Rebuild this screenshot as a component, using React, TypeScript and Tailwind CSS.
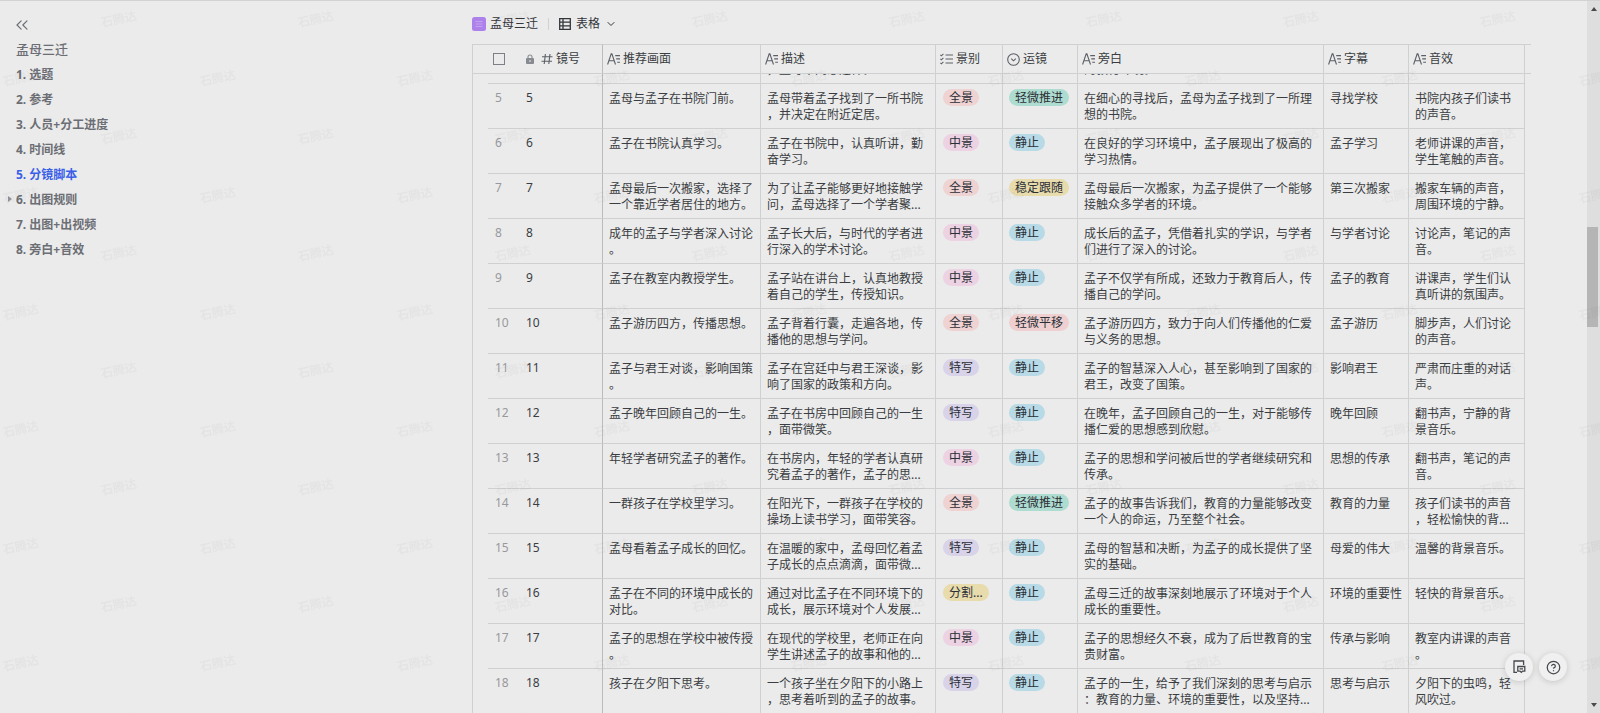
import type { ReactNode } from "react";
import { ChevronDown, ChevronsLeft, CircleHelp } from "lucide-react";

type Shot = {
  id: number;
  scene: string;
  desc: string;
  size: string;
  move: string;
  voice: string;
  caption: string;
  sound: string;
};

const outline = [
  { label: "1. 选题" },
  { label: "2. 参考" },
  { label: "3. 人员+分工进度" },
  { label: "4. 时间线" },
  { label: "5. 分镜脚本", active: true },
  { label: "6. 出图规则", nested: true },
  { label: "7. 出图+出视频" },
  { label: "8. 旁白+音效" },
];

const tagColors: Record<string, string> = {
  全景: "bg-[#efd2d2]",
  中景: "bg-[#ecd2e3]",
  特写: "bg-[#d9d3e9]",
  "分割...": "bg-[#e8dbac]",
  轻微推进: "bg-[#aedcd0]",
  静止: "bg-[#b7dae6]",
  稳定跟随: "bg-[#e8dbac]",
  轻微平移: "bg-[#efcfcf]",
};

const shots: Shot[] = [
  { id: 5, scene: "孟母与孟子在书院门前。", desc: "孟母带着孟子找到了一所书院，并决定在附近定居。", size: "全景", move: "轻微推进", voice: "在细心的寻找后，孟母为孟子找到了一所理想的书院。", caption: "寻找学校", sound: "书院内孩子们读书的声音。" },
  { id: 6, scene: "孟子在书院认真学习。", desc: "孟子在书院中，认真听讲，勤奋学习。", size: "中景", move: "静止", voice: "在良好的学习环境中，孟子展现出了极高的学习热情。", caption: "孟子学习", sound: "老师讲课的声音，学生笔触的声音。" },
  { id: 7, scene: "孟母最后一次搬家，选择了一个靠近学者居住的地方。", desc: "为了让孟子能够更好地接触学问，孟母选择了一个学者聚...", size: "全景", move: "稳定跟随", voice: "孟母最后一次搬家，为孟子提供了一个能够接触众多学者的环境。", caption: "第三次搬家", sound: "搬家车辆的声音，周围环境的宁静。" },
  { id: 8, scene: "成年的孟子与学者深入讨论。", desc: "孟子长大后，与时代的学者进行深入的学术讨论。", size: "中景", move: "静止", voice: "成长后的孟子，凭借着扎实的学识，与学者们进行了深入的讨论。", caption: "与学者讨论", sound: "讨论声，笔记的声音。" },
  { id: 9, scene: "孟子在教室内教授学生。", desc: "孟子站在讲台上，认真地教授着自己的学生，传授知识。", size: "中景", move: "静止", voice: "孟子不仅学有所成，还致力于教育后人，传播自己的学问。", caption: "孟子的教育", sound: "讲课声，学生们认真听讲的氛围声。" },
  { id: 10, scene: "孟子游历四方，传播思想。", desc: "孟子背着行囊，走遍各地，传播他的思想与学问。", size: "全景", move: "轻微平移", voice: "孟子游历四方，致力于向人们传播他的仁爱与义务的思想。", caption: "孟子游历", sound: "脚步声，人们讨论的声音。" },
  { id: 11, scene: "孟子与君王对谈，影响国策。", desc: "孟子在宫廷中与君王深谈，影响了国家的政策和方向。", size: "特写", move: "静止", voice: "孟子的智慧深入人心，甚至影响到了国家的君王，改变了国策。", caption: "影响君王", sound: "严肃而庄重的对话声。" },
  { id: 12, scene: "孟子晚年回顾自己的一生。", desc: "孟子在书房中回顾自己的一生，面带微笑。", size: "特写", move: "静止", voice: "在晚年，孟子回顾自己的一生，对于能够传播仁爱的思想感到欣慰。", caption: "晚年回顾", sound: "翻书声，宁静的背景音乐。" },
  { id: 13, scene: "年轻学者研究孟子的著作。", desc: "在书房内，年轻的学者认真研究着孟子的著作，孟子的思...", size: "中景", move: "静止", voice: "孟子的思想和学问被后世的学者继续研究和传承。", caption: "思想的传承", sound: "翻书声，笔记的声音。" },
  { id: 14, scene: "一群孩子在学校里学习。", desc: "在阳光下，一群孩子在学校的操场上读书学习，面带笑容。", size: "全景", move: "轻微推进", voice: "孟子的故事告诉我们，教育的力量能够改变一个人的命运，乃至整个社会。", caption: "教育的力量", sound: "孩子们读书的声音，轻松愉快的背..." },
  { id: 15, scene: "孟母看着孟子成长的回忆。", desc: "在温暖的家中，孟母回忆着孟子成长的点点滴滴，面带微...", size: "特写", move: "静止", voice: "孟母的智慧和决断，为孟子的成长提供了坚实的基础。", caption: "母爱的伟大", sound: "温馨的背景音乐。" },
  { id: 16, scene: "孟子在不同的环境中成长的对比。", desc: "通过对比孟子在不同环境下的成长，展示环境对个人发展...", size: "分割...", move: "静止", voice: "孟母三迁的故事深刻地展示了环境对于个人成长的重要性。", caption: "环境的重要性", sound: "轻快的背景音乐。" },
  { id: 17, scene: "孟子的思想在学校中被传授。", desc: "在现代的学校里，老师正在向学生讲述孟子的故事和他的...", size: "中景", move: "静止", voice: "孟子的思想经久不衰，成为了后世教育的宝贵财富。", caption: "传承与影响", sound: "教室内讲课的声音。" },
  { id: 18, scene: "孩子在夕阳下思考。", desc: "一个孩子坐在夕阳下的小路上，思考着听到的孟子的故事。", size: "特写", move: "静止", voice: "孟子的一生，给予了我们深刻的思考与启示：教育的力量、环境的重要性，以及坚持...", caption: "思考与启示", sound: "夕阳下的虫鸣，轻风吹过。" },
];

const TextIcon = () => (
  <svg width="13" height="12" viewBox="0 0 13 12" fill="none" stroke="currentColor" strokeWidth="1.1">
    <path d="M.6 11.5 4.2.8h.7l3.6 10.7M1.8 7.8h5.4M8.2 2.6H13M9.2 5.9H13M10.2 9.2H13" />
  </svg>
);

const HashIcon = () => (
  <svg width="12" height="12" viewBox="0 0 12 12" fill="none" stroke="currentColor" strokeWidth="1.1">
    <path d="M4.4 1 3.2 11M9 1 7.8 11M1 3.8h10.5M.5 8.2H11" />
  </svg>
);

const LockIcon = () => (
  <svg width="8" height="10" viewBox="0 0 8 10" fill="none">
    <path d="M2 4.5V3a2 2 0 0 1 4 0v1.5" stroke="#878b91" strokeWidth="1.1" />
    <rect y="4" width="8" height="6" rx="1" fill="#878b91" />
    <path d="M4 6v2" stroke="#ebebeb" />
  </svg>
);

const ListIcon = () => (
  <svg width="13" height="12" viewBox="0 0 13 12" fill="none" stroke="currentColor" strokeWidth="1.1">
    <path d="M5.5 2H13M5.5 6H13M5.5 10H13M.4 1.8l1 1L3.4.8M.4 5.8l1 1 2-2M.4 9.8l1 1 2-2" />
  </svg>
);

const SelectIcon = () => (
  <svg width="13" height="13" viewBox="0 0 13 13" fill="none" stroke="currentColor" strokeWidth="1.1">
    <circle cx="6.5" cy="6.5" r="5.8" />
    <path d="m4.2 5.6 2.3 2.2 2.3-2.2" />
  </svg>
);

const GridIcon = () => (
  <svg width="12" height="12" viewBox="0 0 12 12" fill="none" stroke="currentColor" strokeWidth="1.3">
    <path d="M.7.7h10.6v10.6H.7zM4 .7v10.6M.7 4.2h10.6M.7 7.8h10.6" />
  </svg>
);

const BaseIcon = () => (
  <svg width="14" height="14" viewBox="0 0 14 14" fill="none">
    <rect width="14" height="14" rx="2.5" fill="#ac82ea" />
    <path d="M3.5 4.5h7M3.5 7h7M3.5 9.5h7" stroke="#c7a2f0" />
  </svg>
);

const NoteIcon = () => (
  <svg width="13" height="14" viewBox="0 0 13 14" fill="none" stroke="currentColor" strokeWidth="1.3">
    <path d="M4 12.3H1V1h9.6v4" />
    <path d="M4.8 6.5h7v4.6H9.6l-1.3 1.3L7 11.1H4.8zM6.6 8.8H10" />
  </svg>
);

const Tag = ({ name }: { name: string }) => (
  <span className={`block w-fit rounded-full px-1.5 leading-[17px] whitespace-nowrap text-[#2b2f36] ${tagColors[name]}`}>
    {name}
  </span>
);

// "tail" is what still shows of the row that is scrolled under the header
const columns: { header: string; icon: ReactNode; tail?: string }[] = [
  { header: "推荐画面", icon: <TextIcon /> },
  { header: "描述", icon: <TextIcon />, tail: "，孟母不同意这样。" },
  { header: "景别", icon: <ListIcon /> },
  { header: "运镜", icon: <SelectIcon /> },
  { header: "旁白", icon: <TextIcon />, tail: "的教育环境。" },
  { header: "字幕", icon: <TextIcon /> },
  { header: "音效", icon: <TextIcon /> },
];

const Sidebar = () => (
  <nav className="w-[472px] shrink-0 pt-[14px] pl-4 text-xs font-bold text-[#6b6e74]">
    <button type="button" aria-label="收起目录" className="-ml-1 block">
      <ChevronsLeft size={20} strokeWidth={1.4} />
    </button>
    <h1 className="mt-[2px] text-[13px] leading-[25px] font-medium">孟母三迁</h1>
    <ul>
      {outline.map((item) => (
        <li key={item.label} className="relative leading-[25px]">
          {item.nested && (
            <span className="absolute top-[9px] -left-2 border-y-[3px] border-l-4 border-y-transparent border-l-[#8f9399]" />
          )}
          <a href="#" className={item.active ? "text-[#3a5fe8]" : ""}>
            {item.label}
          </a>
        </li>
      ))}
    </ul>
  </nav>
);

const Watermark = () => (
  <svg className="pointer-events-none absolute inset-0 h-full w-full" aria-hidden="true">
    <defs>
      <pattern id="mark" width="197" height="117" patternUnits="userSpaceOnUse">
        <g fill="#000" fillOpacity="0.035" fontSize="12" fontWeight="500">
          <text x="102" y="26" transform="rotate(-12 102 26)">石腾达</text>
          <text x="4" y="85" transform="rotate(-12 4 85)">石腾达</text>
        </g>
      </pattern>
    </defs>
    <rect width="100%" height="100%" fill="url(#mark)" />
  </svg>
);

const ShotTable = () => {
  const renderRow = (item: Shot) => (
    <tr key={item.id} className="h-[45px] align-top">
      <td />
      <td className="border-b border-[#cfd0d2] pt-1.5 pl-[7px] text-[#97999d]">{item.id}</td>
      <td className="border-r border-b border-r-[#b9bbbe] border-b-[#cfd0d2] pt-1.5">{item.id}</td>
      <td className="border-r border-b border-[#cfd0d2] pt-[7px] pl-1.5">{item.scene}</td>
      <td className="border-r border-b border-[#cfd0d2] pt-[7px] pr-1 pl-1.5">{item.desc}</td>
      <td className="border-r border-b border-[#cfd0d2] pt-[5px] pl-[7px]">
        <Tag name={item.size} />
      </td>
      <td className="border-r border-b border-[#cfd0d2] pt-[5px] pl-1.5">
        <Tag name={item.move} />
      </td>
      <td className="border-r border-b border-[#cfd0d2] pt-[7px] pr-1 pl-1.5">{item.voice}</td>
      <td className="border-r border-b border-[#cfd0d2] pt-[7px] pl-1.5">{item.caption}</td>
      <td className="border-r border-b border-[#cfd0d2] pt-[7px] pr-2 pl-1.5">{item.sound}</td>
    </tr>
  );

  return (
    <table className="w-[1059px] table-fixed border-separate border-spacing-0 border-l border-[#cfd0d2] text-xs leading-4 text-[#3a3d42] [line-break:anywhere] [text-spacing-trim:space-all]">
      <colgroup>
        <col className="w-[15px]" />
        <col className="w-[38px]" />
        <col className="w-[77px]" />
        <col className="w-[158px]" />
        <col className="w-[175px]" />
        <col className="w-[67px]" />
        <col className="w-[75px]" />
        <col className="w-[246px]" />
        <col className="w-[85px]" />
        <col />
        <col className="w-1.5" />
      </colgroup>
      <thead>
        <tr className="h-[30px]">
          <td className="border-y border-[#cfd0d2]" />
          <th className="border-y border-[#cfd0d2] pl-[5px] text-left">
            <input
              type="checkbox"
              aria-label="全选"
              className="block h-3 w-3 appearance-none border border-[#7d8187]"
            />
          </th>
          <th className="border-y border-r border-y-[#cfd0d2] border-r-[#b9bbbe] font-normal">
            <div className="flex items-center gap-[3px]">
              <LockIcon />
              <span className="ml-1 text-[#5c6066]">
                <HashIcon />
              </span>
              镜号
            </div>
          </th>
          {columns.map((col) => (
            <th key={col.header} className="border-y border-r border-[#cfd0d2] pl-1 font-normal">
              <div className="flex items-center gap-[3px]">
                <span className="text-[#5c6066]">{col.icon}</span>
                {col.header}
              </div>
            </th>
          ))}
          <td className="border-y border-[#cfd0d2]" />
        </tr>
      </thead>
      <tbody>
        <tr className="h-[10px] align-top">
          <td />
          <td className="border-b border-[#cfd0d2]" />
          <td className="border-r border-b border-r-[#b9bbbe] border-b-[#cfd0d2]" />
          {columns.map((col) => (
            <td key={col.header} className="border-r border-b border-[#cfd0d2] pl-1.5">
              <div className="flex h-1 items-end overflow-hidden whitespace-nowrap">{col.tail}</div>
            </td>
          ))}
        </tr>
        {shots.map(renderRow)}
      </tbody>
    </table>
  );
};

const ScrollBar = () => (
  <div className="flex w-[13px] shrink-0 flex-col items-center justify-between bg-[#dedede] py-1.5" aria-hidden="true">
    <span className="border-x-[3px] border-b-4 border-x-transparent border-b-[#4a4a4a]" />
    <div className="flex w-full flex-1 flex-col pr-0.5">
      <div className="flex-[216]" />
      <div className="h-[100px] bg-[#b5b5b5]" />
      <div className="flex-[376]" />
    </div>
    <span className="border-x-[3px] border-t-4 border-x-transparent border-t-[#4a4a4a]" />
  </div>
);

const FloatingActions = () => (
  <div className="absolute right-[33px] bottom-8 flex gap-1.5 text-[#45484d]">
    <button
      type="button"
      aria-label="评论"
      className="flex h-7 w-7 items-center justify-center rounded-full bg-[#f0f0f0] shadow-[0_1px_6px_rgba(0,0,0,0.16)]"
    >
      <NoteIcon />
    </button>
    <button
      type="button"
      aria-label="帮助"
      className="flex h-7 w-7 items-center justify-center rounded-full bg-[#f0f0f0] shadow-[0_1px_6px_rgba(0,0,0,0.16)]"
    >
      <CircleHelp size={15} />
    </button>
  </div>
);

const App = () => (
  <div className="relative flex h-screen overflow-hidden border-t border-[#d2d2d2] bg-[#ebebeb] font-['Noto_Sans','Noto_Sans_CJK_SC',sans-serif]">
    <Sidebar />
    <main className="min-w-0 flex-1 overflow-hidden">
      {/* TOP */}
      <div className="flex h-[43px] items-center pt-0.5 text-xs text-[#33363b]">
        <span className="mr-1">
          <BaseIcon />
        </span>
        孟母三迁
        <span className="mx-2.5 h-3 w-px bg-[#d0d1d3]" />
        <button type="button" className="flex items-center gap-[5px]">
          <GridIcon />
          表格
          <ChevronDown size={12} strokeWidth={2} />
        </button>
      </div>
      <ShotTable />
    </main>
    <ScrollBar />
    <Watermark />
    <FloatingActions />
  </div>
);

export default App;
